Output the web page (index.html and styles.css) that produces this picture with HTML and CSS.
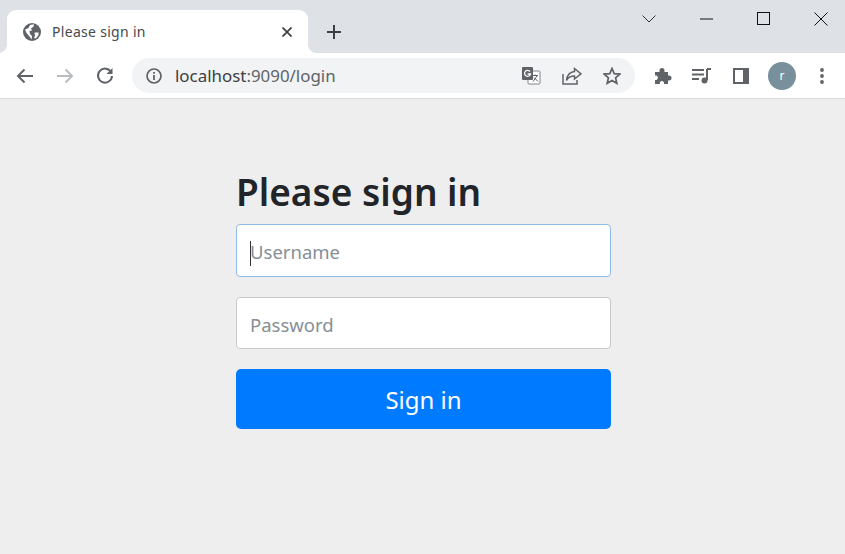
FILE: index.html
```html
<!DOCTYPE html>
<html lang="en">
<head>
    <meta charset="UTF-8">
    <meta name="viewport" content="width=device-width, initial-scale=1.0">
    <title>Please sign in</title>
    <link rel="stylesheet" href="styles.css">
</head>
<body>
    <header class="browser">
        <div class="tabstrip">
            <div class="tab">
                <svg class="tab-globe" width="18" height="18" viewBox="0 0 18 18">
                    <circle cx="9" cy="9" r="9" fill="#5f6368"/>
                    <path d="M2 6.5 L5.5 5 L7 2 L11 1.2 L10.5 3.5 L8 5.5 L9 7.5 L6.5 8 L7 11 L9 13 L8.5 16.5 L6.5 13.5 L3.5 10 Z" fill="#fff"/>
                    <path d="M11.5 9.5 L15.5 9.5 L15.5 12 L13 15.5 L11 15 L12 12.5 Z" fill="#fff"/>
                </svg>
                <span class="tab-title">Please sign in</span>
                <svg class="tab-close" width="10" height="10" viewBox="0 0 10 10">
                    <path d="M0.5 0.5 L9.5 9.5 M9.5 0.5 L0.5 9.5" stroke="#3c4043" stroke-width="1.7" fill="none"/>
                </svg>
            </div>
            <svg class="new-tab" width="14" height="14" viewBox="0 0 14 14">
                <path d="M7 0 V14 M0 7 H14" stroke="#3c4043" stroke-width="2" fill="none"/>
            </svg>
            <div class="win-controls">
                <svg width="14" height="8" viewBox="0 0 14 8"><path d="M0.5 0.5 L7 7 L13.5 0.5" stroke="#333" fill="none"/></svg>
                <svg width="14" height="2" viewBox="0 0 14 2"><path d="M0 1 H13" stroke="#111" fill="none"/></svg>
                <svg width="13" height="13" viewBox="0 0 13 13"><rect x="0.5" y="0.5" width="12" height="12" stroke="#111" fill="none"/></svg>
                <svg width="14" height="14" viewBox="0 0 14 14"><path d="M0.5 0.5 L13.5 13.5 M13.5 0.5 L0.5 13.5" stroke="#111" fill="none"/></svg>
            </div>
        </div>
        <div class="toolbar">
            <svg class="nav-icon" width="18" height="16" viewBox="0 0 18 16"><path d="M17 8 H2 M8.5 1.5 L2 8 L8.5 14.5" stroke="#5f6368" stroke-width="2" fill="none"/></svg>
            <svg class="nav-icon" width="18" height="16" viewBox="0 0 18 16"><path d="M1 8 H16 M9.5 1.5 L16 8 L9.5 14.5" stroke="#b9bcc0" stroke-width="2" fill="none"/></svg>
            <svg class="nav-icon" width="18" height="18" viewBox="0 0 18 18"><path d="M15 5 A7 7 0 1 0 16 9" stroke="#5f6368" stroke-width="2" fill="none"/><path d="M16.5 1 V7 H10.5 Z" fill="#5f6368"/></svg>
            <div class="omnibox">
                <svg width="16" height="16" viewBox="0 0 16 16"><circle cx="8" cy="8" r="7" stroke="#5f6368" stroke-width="1.7" fill="none"/><path d="M8 7 V12 M8 4 V5.8" stroke="#5f6368" stroke-width="1.8" fill="none"/></svg>
                <span class="url">localhost<span class="url-rest">:9090/login</span></span>
                <div class="omni-actions">
                    <svg width="20" height="20" viewBox="0 0 20 20"><rect x="7" y="5" width="12" height="13" rx="1" fill="#fff" stroke="#80868b"/><rect x="1" y="1" width="11" height="13" rx="1" fill="#5f6368"/><path d="M9 5.5 A3 3 0 1 0 9.5 8 H6.5" stroke="#fff" stroke-width="1.3" fill="none"/><path d="M11 9.5 H17 M14 8.5 V9.5 M12 15.5 L16 10 M13 11.5 L17 15.5" stroke="#5f6368" fill="none"/></svg>
                    <svg width="20" height="18" viewBox="0 0 20 18"><path d="M1 7 V17 H15 V13" stroke="#5f6368" stroke-width="1.5" fill="none"/><path d="M12.5 1.5 L19 6.8 L12.5 12 V9 C8 9 6 10.5 4.5 13.5 C5 8.5 8 5 12.5 4.5 Z" stroke="#5f6368" stroke-width="1.5" fill="none"/></svg>
                    <svg width="18" height="18" viewBox="0 0 18 18"><path d="M9 1.5 L11.2 6.6 L16.8 7.1 L12.6 10.8 L13.8 16.3 L9 13.4 L4.2 16.3 L5.4 10.8 L1.2 7.1 L6.8 6.6 Z" stroke="#5f6368" stroke-width="1.7" fill="none"/></svg>
                </div>
            </div>
            <div class="tools">
                <svg width="18" height="18" viewBox="0 0 18 18"><path d="M1 5 H5.5 V3.5 A2.5 2.5 0 0 1 10.5 3.5 V5 H14 V8.5 H15 A2.5 2.5 0 0 1 15 13.5 H14 V17 H10 V15.5 A2.2 2.2 0 0 0 5.8 15.5 V17 H1 V13 H2.5 A2.5 2.5 0 0 0 2.5 8.5 H1 Z" fill="#5f6368"/></svg>
                <svg width="20" height="16" viewBox="0 0 20 16"><path d="M0 2 H12 M0 6.5 H12 M0 11 H7" stroke="#5f6368" stroke-width="1.8" fill="none"/><path d="M15 1 H19 M15 1 V12" stroke="#5f6368" stroke-width="2" fill="none"/><circle cx="12.5" cy="12.5" r="3" fill="#5f6368"/></svg>
                <svg width="18" height="18" viewBox="0 0 18 18"><rect x="1" y="1" width="16" height="16" fill="#5f6368"/><rect x="3" y="3" width="8" height="12" fill="#fff"/></svg>
                <span class="avatar">r</span>
                <svg width="4" height="16" viewBox="0 0 4 16"><circle cx="2" cy="2" r="1.9" fill="#5f6368"/><circle cx="2" cy="8" r="1.9" fill="#5f6368"/><circle cx="2" cy="14" r="1.9" fill="#5f6368"/></svg>
            </div>
        </div>
    </header>

    <main class="page">
        <form class="signin">
            <h2>Please sign in</h2>
            <div class="field">
                <input class="control focused" type="text" placeholder="Username">
                <span class="caret"></span>
            </div>
            <div class="field">
                <input class="control short" type="password" placeholder="Password">
            </div>
            <button class="submit" type="button">Sign in</button>
        </form>
    </main>
</body>
</html>
```
FILE: styles.css
```css
html, body {
    height: 100%;
}
body {
    margin: 0;
    background: #eeeeee;
    font-family: 'Noto Sans', 'Open Sans', sans-serif;
    display: flex;
    flex-direction: column;
    overflow: hidden;
}
.browser {
    background: #fff;
    border-bottom: 1px solid #dadce0;
}
.tabstrip {
    height: 53px;
    background: #dee1e6;
    display: flex;
    align-items: flex-end;
}
.tab {
    position: relative;
    width: 301px;
    height: 43px;
    margin-left: 7px;
    background: #fff;
    border-radius: 9px 9px 0 0;
    display: flex;
    align-items: center;
    padding: 0 16px 0 16px;
    box-sizing: border-box;
}
/* flared corners at the foot of the tab */
.tab::before, .tab::after {
    content: "";
    position: absolute;
    bottom: 0;
    width: 8px;
    height: 8px;
}
.tab::before {
    left: -8px;
    background: radial-gradient(circle at 0 0, #dee1e6 7.5px, #fff 8px);
}
.tab::after {
    right: -8px;
    background: radial-gradient(circle at 100% 0, #dee1e6 7.5px, #fff 8px);
}
.tab-title {
    flex: 1;
    margin-left: 11px;
    font-size: 14px;
    letter-spacing: 0.3px;
    color: #45494d;
}
.new-tab {
    margin: 0 0 14px 19px;
}
.win-controls {
    margin-left: auto;
    align-self: flex-start;
    height: 37px;
    width: 203px;
    padding-right: 17px;
    box-sizing: border-box;
    display: flex;
    align-items: center;
    justify-content: space-between;
}
.toolbar {
    height: 45px;
    display: flex;
    align-items: center;
    padding-left: 16px;
}
.nav-icon {
    margin-right: 22px;
}
.nav-icon:nth-child(3) {
    margin-right: 18px;
}
.omnibox {
    width: 503px;
    height: 35px;
    background: #f1f3f4;
    border-radius: 18px;
    display: flex;
    align-items: center;
    padding: 0 14px 0 14px;
    box-sizing: border-box;
}
.url {
    margin-left: 13px;
    font-size: 16.9px;
    color: #3c4043;
}
.url-rest {
    color: #5f6368;
}
.omni-actions {
    margin-left: auto;
    display: flex;
    align-items: center;
    gap: 21px;
}
.tools {
    flex: 1;
    display: flex;
    align-items: center;
    gap: 20px;
    padding-left: 19px;
}
.avatar {
    width: 28px;
    height: 28px;
    margin: 0 4px 0 -2px;
    border-radius: 50%;
    background: #78909c;
    color: #fff;
    font-size: 12px;
    display: flex;
    align-items: center;
    justify-content: center;
}
.page {
    flex: 1;
    display: flex;
    justify-content: center;
}
.signin {
    width: 375px;
    margin: 65px 0 0 2px;
}
.signin h2 {
    margin: 0 0 4px;
    font-size: 37px;
    font-weight: 600;
    line-height: 56px;
    color: #212529;
}
.field {
    position: relative;
    margin-bottom: 20px;
}
.control {
    display: block;
    width: 100%;
    height: 53px;
    box-sizing: border-box;
    padding: 2px 13px 0;
    border: 1px solid #c8c8c8;
    border-radius: 4px;
    background: #fff;
    font-family: inherit;
    font-size: 18.5px;
    outline: none;
}
.control.short {
    height: 52px;
}
.control::placeholder {
    color: #868e96;
    opacity: 1;
}
.control.focused {
    border-color: #8fbce6;
}
.caret {
    position: absolute;
    left: 14px;
    top: 17px;
    width: 1px;
    height: 25px;
    background: #333;
}
.submit {
    display: block;
    width: 100%;
    height: 60px;
    padding-top: 2px;
    border: none;
    border-radius: 5px;
    background: #007bff;
    color: #fff;
    font-family: inherit;
    font-size: 24px;
}
```
